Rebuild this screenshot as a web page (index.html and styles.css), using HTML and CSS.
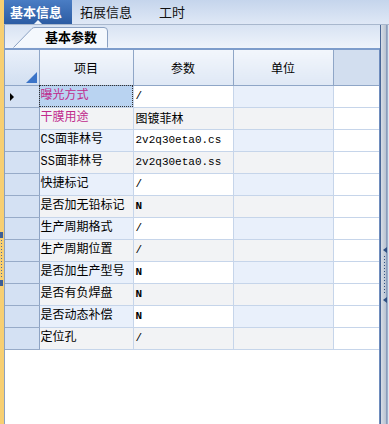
FILE: index.html
```html
<!DOCTYPE html>
<html lang="zh-CN">
<head>
  <meta charset="UTF-8"/>
  <title>基本信息</title>
  <link rel="stylesheet" href="styles.css">
</head>
<body>
  <div class="edge-left">
    <span class="mark"></span>
    <span class="dots"></span>
    <span class="mark"></span>
  </div>

  <div class="main">
    <!-- top tabs -->
    <div class="topbar">
      <div class="top-tab active">基本信息</div>
      <div class="top-tab">拓展信息</div>
      <div class="top-tab">工时</div>
    </div>

    <div class="content">
      <div class="panel">
        <div class="subtabs">
          <div class="sub-tab">
            <svg class="sub-tab-shape" width="96" height="22" viewBox="0 0 96 22">
              <path d="M0.5 21.5 L19 2.5 Q20 1.5 22 1.5 L91 1.5 Q94.5 1.5 94.5 5 L94.5 21.5" fill="#f4f8fd" stroke="#8ba1c2"/>
            </svg>
            <span class="sub-tab-label">基本参数</span>
          </div>
        </div>

        <div class="grid-wrap">
          <table class="grid">
            <colgroup>
              <col class="c-ind"><col class="c-item"><col class="c-param"><col class="c-unit"><col>
            </colgroup>
            <thead>
              <tr>
                <th class="corner"><span class="corner-tri"></span></th>
                <th>项目</th>
                <th>参数</th>
                <th>单位</th>
                <th class="blank"></th>
              </tr>
            </thead>
            <tbody>
              <tr class="odd current">
                <td class="ind"><span class="arrow"></span></td>
                <td class="item pink selected">曝光方式</td>
                <td class="val">/</td><td class="unit"></td><td class="fill"></td>
              </tr>
              <tr class="even">
                <td class="ind"></td>
                <td class="item pink">干膜用途</td>
                <td class="val cjk">图镀菲林</td><td class="unit"></td><td class="fill"></td>
              </tr>
              <tr class="odd">
                <td class="ind"></td>
                <td class="item">CS面菲林号</td>
                <td class="val">2v2q30eta0.cs</td><td class="unit"></td><td class="fill"></td>
              </tr>
              <tr class="even">
                <td class="ind"></td>
                <td class="item">SS面菲林号</td>
                <td class="val">2v2q30eta0.ss</td><td class="unit"></td><td class="fill"></td>
              </tr>
              <tr class="odd">
                <td class="ind"></td>
                <td class="item">快捷标记</td>
                <td class="val">/</td><td class="unit"></td><td class="fill"></td>
              </tr>
              <tr class="even">
                <td class="ind"></td>
                <td class="item">是否加无铅标记</td>
                <td class="val bold">N</td><td class="unit"></td><td class="fill"></td>
              </tr>
              <tr class="odd">
                <td class="ind"></td>
                <td class="item">生产周期格式</td>
                <td class="val">/</td><td class="unit"></td><td class="fill"></td>
              </tr>
              <tr class="even">
                <td class="ind"></td>
                <td class="item">生产周期位置</td>
                <td class="val">/</td><td class="unit"></td><td class="fill"></td>
              </tr>
              <tr class="odd">
                <td class="ind"></td>
                <td class="item">是否加生产型号</td>
                <td class="val bold">N</td><td class="unit"></td><td class="fill"></td>
              </tr>
              <tr class="even">
                <td class="ind"></td>
                <td class="item">是否有负焊盘</td>
                <td class="val bold">N</td><td class="unit"></td><td class="fill"></td>
              </tr>
              <tr class="odd">
                <td class="ind"></td>
                <td class="item">是否动态补偿</td>
                <td class="val bold">N</td><td class="unit"></td><td class="fill"></td>
              </tr>
              <tr class="even">
                <td class="ind"></td>
                <td class="item">定位孔</td>
                <td class="val">/</td><td class="unit"></td><td class="fill"></td>
              </tr>
            </tbody>
          </table>
        </div>
      </div>

      <div class="splitter">
        <span class="mark"></span>
        <span class="dots"></span>
        <span class="mark"></span>
      </div>
    </div>
  </div>
</body>
</html>
```

FILE: styles.css
```css
:root {
  --orange: #f7cf72;
  --line: #c6d5ea;
  --hdr-line: #8fa6c7;
  --row-hdr: #d4e1f3;
  --odd: #e9f0fb;
  --even: #f2f3f5;
  --pink: #c02a8c;
  --cjk: "Noto Sans CJK SC", "Noto Sans CJK JP", sans-serif;
}

* {
  box-sizing: border-box;
  margin: 0;
  padding: 0;
}

html, body {
  width: 389px;
  height: 424px;
  overflow: hidden;
}

body {
  display: flex;
  font-family: "Liberation Sans", var(--cjk);
  font-size: 12px;
  color: #000;
  background: #fff;
}

/*—— left edge ——*/
.edge-left {
  width: 4px;
  flex-shrink: 0;
  background: var(--orange);
  display: flex;
  flex-direction: column;
  align-items: flex-start;
  padding-top: 232px;
}
.edge-left .mark {
  width: 3px;
  height: 6px;
  background: #3d5f95;
}
.edge-left .dots {
  width: 1px;
  height: 38px;
  margin: 2px 0 2px 1px;
  background: repeating-linear-gradient(#4d6c9c 0 1px, transparent 1px 3px);
}

.main {
  flex: 1;
  display: flex;
  flex-direction: column;
  min-width: 0;
}

/*—— TOP TABS ——*/
.topbar {
  height: 25px;
  flex-shrink: 0;
  display: flex;
  align-items: stretch;
  background: linear-gradient(#c5d5ec, #dfe8f6);
  border-bottom: 1px solid #a8b7cd;
}
.top-tab {
  font-family: var(--cjk);
  font-size: 13px;
  line-height: 24px;
  padding: 0 8px 0 7px;
  margin-right: 6px;
  color: #111;
}
.top-tab:nth-child(2) { padding-left: 2px; margin-right: 12px; }
.top-tab.active {
  position: relative;
  width: 68px;
  padding: 0 0 0 6px;
  background: linear-gradient(#4a7dc4, #2c5ca3);
  color: #fff;
  font-weight: bold;
}
.top-tab.active::after {
  content: '';
  position: absolute;
  left: 30px;
  bottom: 0;
  border: 4px solid transparent;
  border-bottom: 4px solid #eef4fc;
  border-top: 0;
}

/*—— CONTENT ——*/
.content {
  flex: 1;
  display: flex;
  min-height: 0;
}
.panel {
  flex: 1;
  display: flex;
  flex-direction: column;
  min-width: 0;
  border-left: 1px solid #8aa0c0;
}

/*—— SUB TABS ——*/
.subtabs {
  height: 23px;
  flex-shrink: 0;
  background: linear-gradient(#d8e3f3, #eef3fb);
  padding-left: 8px;
  display: flex;
  align-items: flex-end;
}
.sub-tab {
  position: relative;
  width: 96px;
  height: 22px;
}
.sub-tab-shape {
  position: absolute;
  left: 0;
  top: 0;
}
.sub-tab-label {
  position: absolute;
  left: 32px;
  top: 2px;
  font-family: var(--cjk);
  font-size: 13px;
  font-weight: bold;
  line-height: 18px;
}

/*—— GRID ——*/
.grid-wrap {
  flex: 1;
  border-top: 2px solid #7d9ccb;
  background: #fff;
  border-right: 1px solid #6e8cbd;
}
.grid {
  width: 100%;
  border-collapse: collapse;
  table-layout: fixed;
}
.c-ind { width: 34px; }
.c-item { width: 94px; }
.c-param { width: 100px; }
.c-unit { width: 100px; }

.grid th {
  height: 35px;
  font-family: var(--cjk);
  font-weight: normal;
  font-size: 12px;
  background: linear-gradient(#f2f6fc, #dfe8f5);
  border-right: 1px solid var(--hdr-line);
  border-bottom: 1px solid var(--hdr-line);
}
.grid th.blank {
  background: #d2deef;
  border-right: 0;
}
.grid th.corner {
  position: relative;
  background: linear-gradient(#e9f0fa, #d2dff1);
}
.corner-tri {
  position: absolute;
  right: 2px;
  bottom: 2px;
  border-left: 11px solid transparent;
  border-bottom: 11px solid #3b74c8;
}

.grid td {
  height: 22px;
  padding: 0 1px;
  border-right: 1px solid var(--line);
  border-bottom: 1px solid var(--line);
  white-space: nowrap;
  overflow: hidden;
  line-height: 20px;
}
.grid td.ind {
  background: var(--row-hdr);
  border-right: 1px solid #8da3c3;
  border-bottom: 1px solid #97abc8;
  position: relative;
}
.arrow {
  position: absolute;
  left: 5px;
  top: 7px;
  border-top: 4px solid transparent;
  border-bottom: 4px solid transparent;
  border-left: 4px solid #000;
}
.grid td.item {
  font-family: "Liberation Mono", var(--cjk);
  font-size: 12px;
}
.grid td.pink { color: var(--pink); }
.grid td.val {
  font-family: "Liberation Mono", monospace;
  font-size: 11px;
  padding-left: 2px;
}
.grid td.val.cjk {
  font-family: var(--cjk);
  font-size: 12px;
}
.grid td.val.bold { font-weight: bold; }
.grid td.fill { border-right: 0; background: #fff; }

.odd .item, .odd .unit { background: var(--odd); }
.odd .val { background: #fff; }
.even .item, .even .val, .even .unit { background: var(--even); }
.grid td.selected {
  background: #b9d3f1;
  outline: 1px dotted #333;
  outline-offset: -1px;
}

/*—— RIGHT SPLITTER ——*/
.splitter {
  width: 9px;
  flex-shrink: 0;
  background: linear-gradient(90deg, #4a6796 0 1px, #d7dde6 1px, #b9c3d1 6px, #5a77a5 7px, #dfe6f0 8px);
  display: flex;
  flex-direction: column;
  align-items: center;
  padding-top: 222px;
}
.splitter .mark {
  width: 0;
  height: 0;
  border-top: 3px solid transparent;
  border-bottom: 3px solid transparent;
  border-right: 4px solid #2f4f82;
}
.splitter .dots {
  width: 1px;
  height: 38px;
  margin: 3px 0;
  background: repeating-linear-gradient(#2f4f82 0 1px, transparent 1px 3px);
}
```
